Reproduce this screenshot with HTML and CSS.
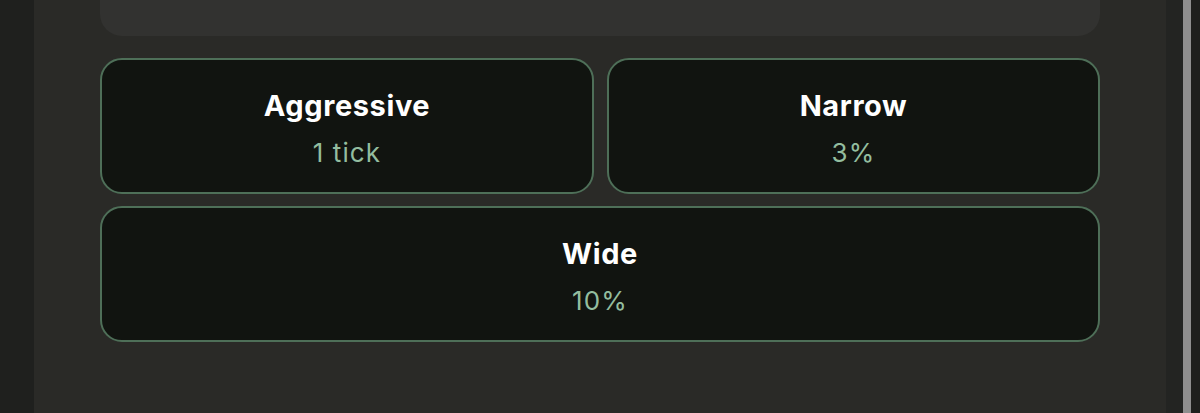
FILE: index.html
```html
<!DOCTYPE html>
<html>
<head>
<meta charset="utf-8">
<link rel="stylesheet" href="styles.css">
</head>
<body>
<div class="app">
  <div class="gutter-left"></div>
  <main class="panel">
    <div class="top-card"></div>
    <div class="options">
      <button class="option">
        <span class="title">Aggressive</span>
        <span class="value">1 tick</span>
      </button>
      <button class="option">
        <span class="title">Narrow</span>
        <span class="value">3%</span>
      </button>
      <button class="option wide">
        <span class="title">Wide</span>
        <span class="value">10%</span>
      </button>
    </div>
  </main>
  <div class="gutter-right"></div>
  <div class="scrollbar"></div>
  <div class="edge"></div>
</div>
</body>
</html>
```
FILE: styles.css
```css
html, body {
  margin: 0;
  padding: 0;
  height: 100%;
  background: #1f201e;
  font-family: "Inter", "Liberation Sans", sans-serif;
  overflow: hidden;
}

.app {
  display: flex;
  height: 413px;
}

.gutter-left {
  width: 34px;
  background: #1f201e;
  flex: none;
}

.panel {
  width: 1132px;
  flex: none;
  background: #2a2a27;
  padding-left: 66px;
  box-sizing: border-box;
}

.top-card {
  width: 1000px;
  height: 36px;
  background: #323230;
  border-radius: 0 0 22px 22px;
}

.options {
  width: 1000px;
  margin-top: 22px;
  display: grid;
  grid-template-columns: 494px 493px;
  column-gap: 13px;
  row-gap: 12px;
}

.option {
  height: 136px;
  box-sizing: border-box;
  background: #111410;
  border: 2px solid #4e6f58;
  border-radius: 22px;
  display: flex;
  flex-direction: column;
  align-items: center;
  justify-content: center;
  gap: 14px;
  padding: 6px 0 0 0;
  font-family: inherit;
  cursor: pointer;
}

.option.wide {
  grid-column: 1 / span 2;
}

.title {
  color: #ffffff;
  font-size: 29px;
  font-weight: 700;
  line-height: 34px;
  letter-spacing: 0.6px;
}

.value {
  color: #93bd9f;
  font-size: 26px;
  font-weight: 400;
  line-height: 32px;
  letter-spacing: 1.1px;
}

.gutter-right {
  width: 17px;
  flex: none;
  background: #232422;
}

.scrollbar {
  width: 8px;
  flex: none;
  background: #8e8e8e;
}

.edge {
  flex: 1;
  background: #1e1f1d;
}
```
